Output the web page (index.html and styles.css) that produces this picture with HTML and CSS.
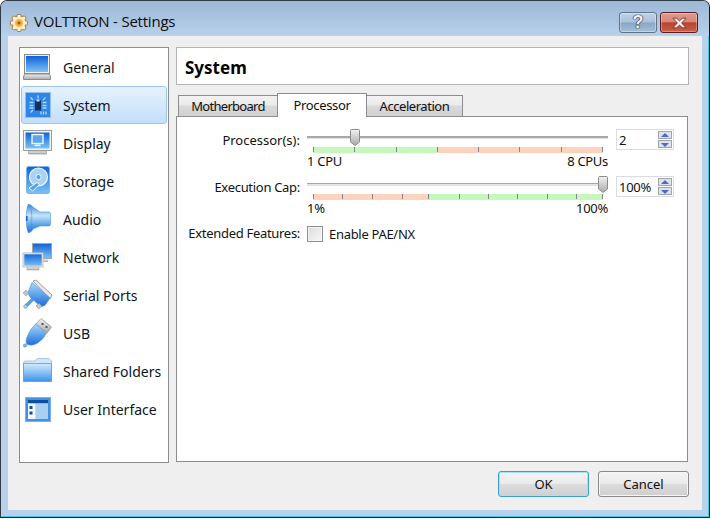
FILE: index.html
```html
<!DOCTYPE html>
<html lang="en">
<head>
<meta charset="utf-8">
<title>VOLTTRON - Settings</title>
<link rel="stylesheet" href="styles.css">
</head>
<body>
<div class="window">
  <header class="titlebar">
    <svg class="app-icon" viewBox="0 0 18 18">
      <defs>
        <linearGradient id="blue" x1="0" y1="0" x2="0" y2="1"><stop offset="0" stop-color="#a8d8f8"/><stop offset="1" stop-color="#1a6fdc"/></linearGradient>
        <linearGradient id="bluelight" x1="0" y1="0" x2="0" y2="1"><stop offset="0" stop-color="#d4ecfb"/><stop offset="1" stop-color="#3d93ea"/></linearGradient>
        <linearGradient id="bluev" x1="0" y1="0" x2="0" y2="1"><stop offset="0" stop-color="#3a8be0"/><stop offset=".4" stop-color="#c6e4f9"/><stop offset=".75" stop-color="#4f9fe8"/><stop offset="1" stop-color="#2273d8"/></linearGradient>
        <linearGradient id="screen" x1="0" y1="0" x2="0" y2="1"><stop offset="0" stop-color="#0f62d9"/><stop offset="1" stop-color="#7cc3f4"/></linearGradient>
        <linearGradient id="gray" x1="0" y1="0" x2="0" y2="1"><stop offset="0" stop-color="#f2f2f2"/><stop offset="1" stop-color="#a9a9a9"/></linearGradient>
        <radialGradient id="gold"><stop offset="0" stop-color="#c9781a"/><stop offset=".45" stop-color="#eda52f"/><stop offset="1" stop-color="#f8cf78"/></radialGradient>
      </defs>
      <g fill="#fff1cf" stroke="#8f5a1d" stroke-width=".7">
        <rect x="7" y=".5" width="4" height="4" rx="1"/><rect x="7" y="13.500" width="4" height="4" rx="1"/>
        <rect x=".5" y="7" width="4" height="4" rx="1"/><rect x="13.500" y="7" width="4" height="4" rx="1"/>
        <rect x="2.300" y="2.300" width="4" height="4" rx="1"/><rect x="11.700" y="2.300" width="4" height="4" rx="1"/>
        <rect x="2.300" y="11.700" width="4" height="4" rx="1"/><rect x="11.700" y="11.700" width="4" height="4" rx="1"/>
      </g>
      <circle cx="9" cy="9" r="6.300" fill="#fff1cf"/>
      <circle cx="9" cy="9" r="4.400" fill="url(#gold)"/>
      <circle cx="9" cy="9" r="1.300" fill="#9a5a10"/>
    </svg>
    <span class="title-text">VOLTTRON - Settings</span>
    <div class="caption-buttons">
      <div class="caption help">?</div>
      <div class="caption close">
        <svg viewBox="0 0 14 10" class="close-x"><path d="M1.5 1 L4.5 1 L7 3.2 L9.5 1 L12.5 1 L8.8 5 L12.5 9 L9.5 9 L7 6.8 L4.5 9 L1.5 9 L5.2 5 Z" fill="#f4efee" stroke="#6d2a20" stroke-width=".7"/></svg>
      </div>
    </div>
  </header>

  <main class="client">
    <div class="columns">
      <nav class="sidebar">
        <div class="nav-item">
          <svg class="nav-icon" viewBox="0 0 32 32"><rect x="2.500" y="3.500" width="25" height="19" fill="#f0f0f0" stroke="#8c8c8c"/><rect x="4" y="5" width="22" height="16" fill="url(#screen)"/><path d="M2.500 23 H27.500 L28.500 26 V28.500 H1.500 V26 Z" fill="url(#gray)" stroke="#8c8c8c"/></svg>
          <span>General</span>
        </div>
        <div class="nav-item active">
          <svg class="nav-icon" viewBox="0 0 32 32"><rect x="3.500" y="3.500" width="25" height="25" fill="#2f86e6" stroke="#8fc0ee"/><g stroke="#a9d8fb" stroke-width="1.400"><path d="M8.500 8.500 L11 11M23.500 8.500 L21 11M8.500 23.500 L11 21M16 6.500 V9.500M7.500 13.500 H11.500M7.500 16.500 H11.500M7.500 19 H11.500M20.500 13.500 H24.500M20.500 16.500 H24.500M20.500 19 H24.500M19 22.500 V25.500M21.500 22.500 V25.500M24 22.500 V25.500"/></g><rect x="13" y="11.500" width="6" height="10" fill="#13315f"/><rect x="14.500" y="10.500" width="3" height="2" fill="#cfe6f8"/></svg>
          <span>System</span>
        </div>
        <div class="nav-item">
          <svg class="nav-icon" viewBox="0 0 32 32"><rect x="1.500" y="3.500" width="28" height="20" fill="#f4f4f4" stroke="#9c9c9c"/><rect x="3.500" y="5.500" width="24" height="16" fill="url(#screen)"/><rect x="10" y="7.500" width="11" height="9" fill="#5aa6ec" stroke="#f2f8fd" stroke-width="1.400"/><rect x="12.500" y="17.500" width="6" height="1.600" fill="#f2f8fd"/><path d="M6.500 24 H24.500 V27 H6.500 Z" fill="url(#gray)" stroke="#9c9c9c" stroke-width=".7"/></svg>
          <span>Display</span>
        </div>
        <div class="nav-item">
          <svg class="nav-icon" viewBox="0 0 32 32"><rect x="4.500" y="1.500" width="23" height="27" rx="2" fill="url(#screen)" stroke="#7cb5e8"/><circle cx="16.500" cy="12" r="9" fill="#a9d3f4" stroke="#f4faff" stroke-width="1.200"/><circle cx="16.500" cy="12" r="2.600" fill="#5f9fdc" stroke="#f4faff" stroke-width=".9"/><path d="M7 23 L15 17.500 L17.500 19.500 L10.500 26 Z" fill="#5f9fdc" stroke="#f4faff" stroke-width="1"/></svg>
          <span>Storage</span>
        </div>
        <div class="nav-item">
          <svg class="nav-icon" viewBox="0 0 32 32"><path d="M6 1.500 C9 1.500 10 3 11 4 L18 9 H27 Q28.500 9 28.500 11 V21 Q28.500 23 27 23 H18 L11 26 C10 28 9 29.500 6 29.500 Z" fill="url(#bluev)" stroke="#4d95df" stroke-width=".6"/><ellipse cx="7" cy="15.500" rx="2.800" ry="14" fill="url(#bluev)" stroke="#3b86da" stroke-width=".5"/><rect x="4" y="13" width="1.600" height="5" fill="#1e62b8"/></svg>
          <span>Audio</span>
        </div>
        <div class="nav-item">
          <svg class="nav-icon" viewBox="0 0 32 32"><rect x="10.500" y="2.500" width="19" height="15" fill="url(#screen)" stroke="#a4a4a4"/><rect x="16" y="18" width="10" height="3" fill="url(#gray)"/><rect x="1.500" y="12.500" width="19" height="13" fill="url(#screen)" stroke="#f0f0f0" stroke-width="1.600"/><rect x="1" y="12" width="20" height="14" fill="none" stroke="#a4a4a4" stroke-width=".6"/><rect x="5" y="26" width="12" height="3" fill="url(#gray)" stroke="#9c9c9c" stroke-width=".5"/></svg>
          <span>Network</span>
        </div>
        <div class="nav-item">
          <svg class="nav-icon" viewBox="0 0 32 32"><path d="M11 2 L14 1 L30 16 L28 20 Z" fill="#e8e8e8" stroke="#8c8c8c" stroke-width=".8"/><path d="M4 27 L11 20" stroke="#5a9fe6" stroke-width="3.500"/><path d="M10 3.500 L28 19 L24 25 Q21 29 17 26 L8 18 Q5 14 7 11 Z" fill="url(#blue)" stroke="#4f93dd" stroke-width=".7"/><circle cx="3.500" cy="27.500" r="1.800" fill="#a9d3f4" stroke="#7e8fa3" stroke-width=".7"/><rect x="2" y="12" width="4" height="4" fill="#c2c7cd" stroke="#7e8792" stroke-width=".6" transform="rotate(45 4 14)"/><rect x="15" y="25" width="4" height="4" fill="#c2c7cd" stroke="#7e8792" stroke-width=".6" transform="rotate(45 17 27)"/></svg>
          <span>Serial Ports</span>
        </div>
        <div class="nav-item">
          <svg class="nav-icon" viewBox="0 0 32 32"><path d="M19 1.500 L29.500 10 L25 16 L14 7 Z" fill="url(#gray)" stroke="#8c8c8c" stroke-width=".7"/><rect x="19.500" y="6" width="2" height="2" fill="#555"/><rect x="23.500" y="9" width="2" height="2" fill="#555"/><path d="M13.500 7 L24.500 16 Q22 22 15 26.500 Q10 29.500 5 27.500 Q3 25 5 20 Q8 12 13.500 7 Z" fill="url(#blue)" stroke="#5e9fe0" stroke-width=".7"/><circle cx="3" cy="28.500" r="1.600" fill="#7db7ee" stroke="#4a7fb8" stroke-width=".6"/></svg>
          <span>USB</span>
        </div>
        <div class="nav-item">
          <svg class="nav-icon" viewBox="0 0 32 32"><path d="M1.500 8 L2.500 6 H13 L15 3.500 H27 L29.500 6 V26 H1.500 Z" fill="#cfe7fa" stroke="#8ebee9" stroke-width=".8"/><rect x="1.500" y="8.500" width="28" height="18" fill="url(#bluelight)" stroke="#5b9fe2" stroke-width=".8"/></svg>
          <span>Shared Folders</span>
        </div>
        <div class="nav-item">
          <svg class="nav-icon" viewBox="0 0 32 32"><rect x="3.500" y="4.500" width="25" height="24" fill="#3f92e6" stroke="#79b2ea"/><rect x="6" y="7" width="20" height="19" fill="#d6e9fb"/><rect x="6" y="7" width="20" height="3.500" fill="#0d4f9e"/><rect x="6" y="10.500" width="7" height="15.500" fill="#f5fafe"/><rect x="13.500" y="10.500" width="12.500" height="15.500" fill="#a9cff3"/><rect x="7.500" y="13" width="3" height="3" fill="#0d4f9e"/><rect x="7.500" y="18.500" width="3" height="3" fill="#0d4f9e"/></svg>
          <span>User Interface</span>
        </div>
      </nav>

      <section class="content">
        <div class="page-header">System</div>
        <div class="tabs">
          <div class="tab tab-mother">Motherboard</div>
          <div class="tab tab-proc selected">Processor</div>
          <div class="tab tab-accel">Acceleration</div>
        </div>
        <div class="tab-pane">
          <div class="form">
            <div class="field-label wide">Processor(s):</div>
            <div class="slider">
              <div class="track">
                <svg class="thumb thumb-proc" viewBox="0 0 10 17"><path d="M1.500 .5 H8.500 Q9.500 .5 9.500 1.500 V13 L5 16.500 L.5 13 V1.500 Q.5 .5 1.500 .5 Z" fill="url(#gray)" stroke="#8b8b8b"/></svg>
              </div>
              <div class="scale">
                <div class="seg good seg-124"></div><div class="seg warn seg-166"></div>
                <i class="tick t1"></i><i class="tick t2"></i><i class="tick t3"></i><i class="tick t4"></i><i class="tick t5"></i><i class="tick t6"></i><i class="tick t7"></i><i class="tick t8"></i>
              </div>
              <div class="ends"><span>1 CPU</span><span>8 CPUs</span></div>
            </div>
            <div class="spin"><span>2</span><div class="arrows"><b class="up"></b><b class="down"></b></div></div>

            <div class="field-label">Execution Cap:</div>
            <div class="slider">
              <div class="track">
                <svg class="thumb thumb-cap" viewBox="0 0 10 17"><path d="M1.500 .5 H8.500 Q9.500 .5 9.500 1.500 V13 L5 16.500 L.5 13 V1.500 Q.5 .5 1.500 .5 Z" fill="url(#gray)" stroke="#8b8b8b"/></svg>
              </div>
              <div class="scale">
                <div class="seg warn seg-117"></div><div class="seg good seg-173"></div>
                <i class="tick c1"></i><i class="tick c2"></i><i class="tick c3"></i><i class="tick c4"></i><i class="tick c5"></i><i class="tick c6"></i><i class="tick c7"></i><i class="tick c8"></i><i class="tick c9"></i><i class="tick c10"></i><i class="tick c11"></i>
              </div>
              <div class="ends"><span>1%</span><span>100%</span></div>
            </div>
            <div class="spin"><span>100%</span><div class="arrows"><b class="up"></b><b class="down"></b></div></div>

            <div class="field-label ext">Extended Features:</div>
            <div class="check-row"><div class="checkbox"></div><span>Enable PAE/NX</span></div>
          </div>
        </div>
      </section>
    </div>
    <footer class="buttons">
      <div class="btn default">OK</div>
      <div class="btn">Cancel</div>
    </footer>
  </main>
</div>
</body>
</html>
```

FILE: styles.css
```css
* { box-sizing: border-box; }
html, body { margin: 0; height: 519px; background: #fff; overflow: hidden; }
body { font-family: "Noto Sans", sans-serif; font-size: 14px; color: #000; }

.window {
  width: 710px; height: 518px;
  display: flex; flex-direction: column;
  background: #b9d1ea;
  border-radius: 7px 7px 0 0;
  border: 1px solid #2c3b47;
  border-right-color: #0b1a20;
  border-bottom-color: #0b1a20;
  box-shadow: inset -1px -1px 0 #2fd0ee;
}
.titlebar {
  height: 35px; flex: none;
  display: flex; align-items: center;
  padding: 8px 11px 0 9px;
  background: linear-gradient(#9cb8d5, #b8d1eb);
  border-radius: 6px 6px 0 0;
}
.app-icon { width: 18px; height: 18px; flex: none; }
.title-text { margin-left: 6px; padding-bottom: 3px; font-family: "Open Sans", sans-serif; font-size: 15px; letter-spacing: -.22px; color: #0c0c0c; flex: 1; }
.caption-buttons { display: flex; gap: 3px; }
.caption {
  width: 38px; height: 21px; border-radius: 3px;
  display: flex; align-items: center; justify-content: center;
}
.help {
  border: 1px solid #5e7388;
  background: linear-gradient(#bdd2e8 0, #a9c2dc 48%, #88a6c4 52%, #a6bfd9 100%);
  color: #eef0f2; font: bold 18px "Liberation Sans", sans-serif;
  text-shadow: 0 0 1px #222, 0 0 1px #222, 0 0 1px #222;
  box-shadow: inset 0 0 0 1px rgba(255,255,255,.35);
}
.close {
  border: 1px solid #5b1c24;
  background: linear-gradient(#e09a8d 0, #d8857a 46%, #b9432c 52%, #c9624c 100%);
  box-shadow: inset 0 0 0 1px rgba(255,255,255,.3);
}
.close-x { width: 17px; height: 12px; }

.client {
  flex: 1; display: flex; flex-direction: column;
  margin: 0 7px 7px 7px;
  padding: 11px 13px 11px 11px;
  background: #efefef;
}
.columns { display: flex; gap: 7px; height: 416px; flex: none; }

.sidebar {
  width: 150px; flex: none;
  background: #fff; border: 1px solid #8b8d93;
  display: flex; flex-direction: column;
  padding: 0 1px;
}
.nav-item {
  height: 38px; flex: none;
  display: flex; align-items: center; gap: 9px;
  border: 1px solid transparent;
  font-size: 14px;
  color: #0c1522;
}
.nav-item.active {
  border: 1px solid #9fc6ea; border-radius: 3px;
  background: linear-gradient(#e6f2fd, #c3dffa);
}
.nav-icon { width: 32px; height: 32px; flex: none; }

.content { flex: 1; display: flex; flex-direction: column; min-width: 0; }
.page-header {
  height: 38px; flex: none;
  background: #fff; border: 1px solid #b4b4b4;
  padding: 2px 0 0 8px;
  display: flex; align-items: center;
  font-weight: 700; font-size: 17px;
}
.tabs { display: flex; align-items: flex-end; height: 31px; flex: none; padding-left: 2px; position: relative; z-index: 1; }
.tab {
  height: 21px; border: 1px solid #8b8d93; border-bottom: 0; margin-right: -1px;
  background: linear-gradient(#f2f2f2 0, #ebebeb 45%, #d9d9d9 50%, #d2d2d2 100%);
  display: flex; align-items: center; justify-content: center;
  font-size: 13px; letter-spacing: -.35px; color: #101010;
}
.tab-mother { width: 100px; letter-spacing: -.7px; }
.tab-proc { width: 90px; }
.tab-accel { width: 97px; letter-spacing: -.45px; }
.tab.selected { height: 24px; background: #fff; margin-bottom: -1px; padding-bottom: 2px; position: relative; }
.tab-pane { flex: 1; width: 512px; background: #fff; border: 1px solid #8b8d93; margin-bottom: 1px; padding: 12px 13px 0 0; }

.form {
  display: grid;
  grid-template-columns: 123px 302px 58px;
  column-gap: 7px;
  grid-template-rows: 47px 47px auto;
  justify-content: start;
  font-size: 13px; letter-spacing: -.3px; color: #111;
}
.field-label { text-align: right; padding-top: 2px; line-height: 18px; }
.field-label.wide { letter-spacing: 0; }
.field-label.ext { padding-top: 1px; }

.slider { display: flex; flex-direction: column; margin-right: 1px; }
.track { height: 3px; margin-top: 7px; background: linear-gradient(#a8a8a8 0, #a8a8a8 50%, #e4e4e4 50%); position: relative; flex: none; }
.thumb { position: absolute; top: -7px; width: 10px; height: 17px; }
.thumb-proc { left: 43px; }
.thumb-cap { left: 291px; }
.scale { display: flex; height: 6px; margin: 8px 5px 0 6px; position: relative; flex: none; }
.seg { height: 6px; }
.seg-124 { width: 124px; }
.seg-166 { width: 166px; }
.seg-117 { width: 117px; }
.seg-173 { width: 173px; }
.good { background: #c6f7bc; }
.warn { background: #fdd3bd; }
.tick { position: absolute; top: 0; width: 1px; height: 5px; background: #858585; }
.t1 { left: 0; } .t2 { left: 41px; } .t3 { left: 83px; } .t4 { left: 124px; } .t5 { left: 165px; } .t6 { left: 206px; } .t7 { left: 248px; } .t8 { left: 289px; }
.c1 { left: 0; } .c2 { left: 29px; } .c3 { left: 59px; } .c4 { left: 89px; } .c5 { left: 115px; } .c6 { left: 146px; } .c7 { left: 175px; } .c8 { left: 204px; } .c9 { left: 234px; } .c10 { left: 263px; } .c11 { left: 289px; }
.ends { display: flex; justify-content: space-between; line-height: 16px; font-size: 13px; }

.spin {
  height: 21px; width: 58px;
  background: #fff; border: 1px solid #d9dde2;
  display: flex; align-items: center; justify-content: space-between;
  padding: 0 1px 0 2px;
  font-size: 13px;
}
.arrows { display: flex; flex-direction: column; width: 14px; height: 17px; gap: 1px; }
.arrows b { flex: 1; background: #dfe2ea; border: 1px solid #a0a4ac; position: relative; display: block; }
.arrows b::after {
  content: ""; position: absolute; left: 2px; border-left: 4px solid transparent; border-right: 4px solid transparent;
}
.up::after { top: 1px; border-bottom: 4px solid #4d6bc2; }
.down::after { top: 2px; border-top: 4px solid #4d6bc2; }

.check-row { grid-column: 2 / 4; display: flex; align-items: center; gap: 6px; padding-top: 2px; }
.checkbox {
  width: 16px; height: 16px; flex: none;
  border: 1px solid #8e8f8f;
  background: linear-gradient(135deg, #dcdcdc, #f7f7f7);
  box-shadow: inset 0 0 0 1px #f4f4f4;
}

.buttons { display: flex; justify-content: flex-end; gap: 9px; padding-top: 8px; }
.btn {
  width: 91px; height: 26px;
  border: 1px solid #8a8a8a; border-radius: 3px;
  background: linear-gradient(#f3f3f3 0, #ebebeb 48%, #dcdcdc 52%, #cfcfcf 100%);
  box-shadow: inset 0 0 0 1px #f6f6f6;
  display: flex; align-items: center; justify-content: center;
  font-size: 13px; color: #111;
}
.btn.default { border-color: #3a9fd0; box-shadow: inset 0 0 0 1px #a5e2f6; }
```
